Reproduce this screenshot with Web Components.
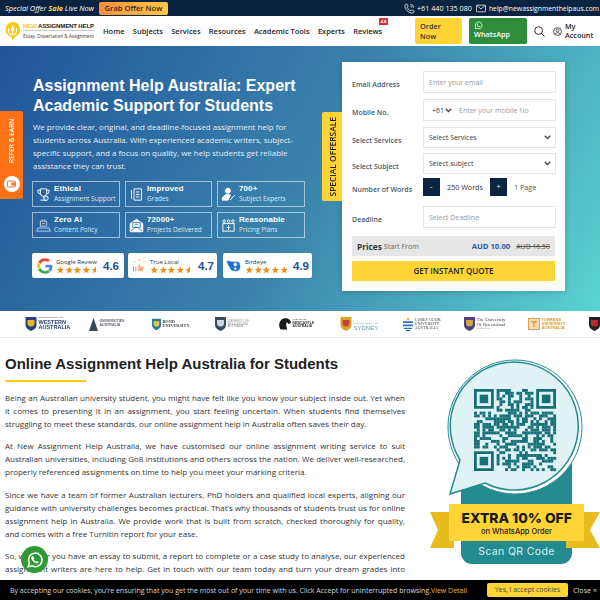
<!DOCTYPE html>
<html lang="en"><head><meta charset="utf-8"><title>Assignment Help Australia</title>
<style>
html,body{margin:0;padding:0;height:600px;overflow:hidden;background:#fff}
body{font-family:"Open Sans","Liberation Sans",sans-serif;color:#333}
</style></head><body>
<x-page></x-page>
<script>
function def(name, css, html){
  customElements.define(name, class extends HTMLElement{
    constructor(){super();this.attachShadow({mode:'open'}).innerHTML='<style>'+css+'</style>'+(typeof html==='function'?html(this):html);}
  });
}
const ic={
 phone:'<svg width="11" height="11" viewBox="0 0 24 24" fill="none" stroke="#fff" stroke-width="1.700"><path d="M6 2l3 5-2 2c1 3 4 7 8 8l2-2 5 3c0 3-2 4-4 4C9 22 2 13 2 6c0-2 2-4 4-4z"/><path d="M14 3a7 7 0 0 1 7 7M14 7a3 3 0 0 1 3 3"/></svg>',
 mail:'<svg width="10" height="9" viewBox="0 0 24 20" fill="none" stroke="#fff" stroke-width="1.800"><rect x="1" y="2" width="22" height="16" rx="2"/><path d="M2 3l10 8 10-8"/></svg>',
 wa:s=>`<svg width="${s}" height="${s}" viewBox="0 0 24 24"><path fill="none" stroke="currentColor" stroke-width="2" d="M3 21l1.400-5A9 9 0 1 1 8 19.700z"/><path fill="currentColor" d="M8.500 7c-.6 0-1.500 1-1.500 2.400 0 2.600 4.500 7.300 7.700 7.300 1.400 0 2.300-1 2.300-2l-2.600-1.500-1.100 1.100c-1.300-.5-2.700-1.800-3.300-3.200l1-1.100L9.700 7z"/></svg>`
};
const star=(c)=>`<svg viewBox="0 0 20 20" width="100%" height="100%"><path fill="${c}" d="M10 1l2.700 6 6.300.6-4.800 4.300 1.400 6.400L10 15l-5.600 3.300 1.400-6.400L1 7.600 7.300 7z"/></svg>`;

def('x-topbar',`:host{display:flex;align-items:center;height:16px;background:#0a2340;color:#fff;padding:0 5px;box-sizing:border-box}
 i{white-space:nowrap;font-size:7.400px;width:90px;flex:none} b{color:#ffd535;font-weight:700}
 .grab{margin-left:4px;width:69px;height:13px;line-height:13px;text-align:center;border-radius:2px;background:linear-gradient(90deg,#ff8f3c,#ffc843);color:#2a2a2a;font-size:7.600px;font-weight:600}
 .r{margin-left:auto;display:flex;align-items:center;white-space:nowrap;font-size:7.200px;margin-right:-5px;width:196px}
 .r span:first-of-type{margin:0 4px 0 2px}.r span:last-of-type{margin-left:3px;font-size:6.800px}
 svg{display:block;flex:none}`,
 `<i>Special Offer <b>Sale</b> Live Now</i><div class="grab">Grab Offer Now</div><div class="r">${ic.phone}<span>+61 440 135 080</span>${ic.mail}<span>help@newassignmenthelpaus.com</span></div>`);

def('x-logo',`:host{display:flex;align-items:center;width:90px;flex:none}
 svg{flex:none;display:block}
 .t{margin-left:3px;line-height:1} .a{font:700 6px "Liberation Sans",sans-serif;color:#222;white-space:nowrap;border-bottom:.5px solid #ccc;padding-bottom:1px;letter-spacing:-.02em} .a b{color:#f8c81e}
 .b{font:400 4.600px "Open Sans",sans-serif;color:#333;white-space:nowrap;margin-top:2px}`,
 `<svg width="15" height="18" viewBox="0 0 15 18"><path fill="#fcc917" d="M7.500 0a7.500 7.500 0 0 1 3 14.400L7.500 18l-1.500-3.300A7.500 7.500 0 0 1 7.500 0z"/><path fill="#fff" d="M7.500 3L9.500 8 8 9.500V12H7V9.500L5.500 8z"/><path fill="none" stroke="#fff" d="M3.500 6v3a4 4 0 0 0 8 0V6"/></svg><div class="t"><div class="a"><b>NEW</b> ASSIGNMENT HELP</div><div class="b">Essay, Dissertation &amp; Assignment</div></div>`);

def('x-nav',`:host{display:flex;align-items:center;height:30px;background:#fff;padding-left:5px;box-sizing:border-box;position:relative}
 nav{display:flex;margin-left:8px;gap:8.350px;width:279px;flex:none;font-size:7.450px;font-weight:600;color:#1d1d1d;white-space:nowrap}
 nav span{position:relative}
 em{position:absolute;left:26px;top:-8px;background:#d8323c;color:#fff;font:normal 700 4px "Open Sans",sans-serif;padding:1px 1.500px;line-height:5px}
 .btn{height:26px;box-sizing:border-box;border-radius:2px;font-size:7.300px;font-weight:600;line-height:9.500px}
 .o{margin-left:33px;width:47px;background:#ffd535;color:#333;padding:4px 5px 0}
 .w{margin-left:7px;width:58px;background:#2d8d3a;color:#fff;padding:3px 5px 0}
 .w svg{display:block;margin-bottom:0}
 .s{margin-left:7px;display:block;flex:none}
 .u{margin-left:8px;display:block;flex:none}
 .m{margin-left:3px;font-size:7.200px;font-weight:600;line-height:9.500px;color:#222}`,
 `<x-logo></x-logo><nav><span>Home</span><span>Subjects</span><span>Services</span><span>Resources</span><span>Academic Tools</span><span>Experts</span><span>Reviews<em>4.8</em></span></nav>
 <div class="btn o">Order<br>Now</div><div class="btn w">${ic.wa(9)}WhatsApp</div>
 <svg class="s" width="11" height="11" viewBox="0 0 24 24" fill="none" stroke="#222" stroke-width="2"><circle cx="10" cy="10" r="8.500"/><path d="M16 16l7 7"/></svg>
 <svg class="u" width="9" height="9" viewBox="0 0 24 24" fill="none" stroke="#222" stroke-width="2"><circle cx="12" cy="12" r="10.500"/><circle cx="12" cy="9" r="4"/><path d="M5 19c2-5 12-5 14 0"/></svg>
 <div class="m">My<br>Account</div>`);

def('x-feature',`:host{display:flex;align-items:center;box-sizing:border-box;height:26px;border:1px solid rgba(255,255,255,.55);color:#fff;padding-left:3px}
 ::slotted(svg){width:15px;height:15px;flex:none;display:block}
 .t{margin-left:3px;white-space:nowrap;line-height:10px}
 b{display:block;font:700 7.900px "Liberation Sans",sans-serif;letter-spacing:.02em;line-height:10px}
 span{display:block;font-size:6.500px;color:#dce9f2;line-height:10px}`,
 h=>`<slot></slot><div class="t"><b>${h.getAttribute('t')}</b><span>${h.getAttribute('s')}</span></div>`);

def('x-stars',`:host{display:flex;height:8px} div{width:8.700px;height:8px;flex:none} svg{display:block} .p{width:5px;overflow:hidden}.p svg{width:8.700px}`,
 h=>{const n=+h.getAttribute('n');let o='';for(let i=0;i<4;i++)o+=`<div>${star('#e8941a')}</div>`;o+=n>=5?`<div>${star('#e8941a')}</div>`:`<div class="p">${star('#e8941a')}</div>`;return o;});

def('x-rating',`:host{display:flex;align-items:center;background:#fff;border-radius:2px;height:25px;width:89px;box-sizing:border-box;padding-left:var(--p,4px);box-shadow:0 0 1px rgba(0,0,0,.2)}
 ::slotted(svg){display:block;flex:none}
 .t{margin-left:3px;line-height:1}
 span{display:block;font-size:6px;color:#333;line-height:8px;white-space:nowrap}
 b{margin-left:auto;margin-right:var(--mr,3px);font:700 11.500px "Liberation Sans",sans-serif;color:#24528f}`,
 h=>`<slot></slot><div class="t"><span>${h.getAttribute('t')}</span><x-stars n="${h.getAttribute('n')}"></x-stars></div><b>${h.getAttribute('v')}</b>`);

def('x-hero-left',`:host{display:block;width:280px;flex:none;color:#fff}
 h1{margin:0;font:700 16px/20px "Liberation Sans",sans-serif;color:#fff;width:272px}
 p{margin:5px 0 0;font-size:7.950px;line-height:13px;color:#e4eef5;width:272px}
 .f{display:grid;grid-template-columns:88px 87px 88px;gap:5px;margin-top:8px;width:273px;margin-left:-1px}
 .r{display:flex;gap:4px;margin-top:15px;margin-left:-1px}
 svg{fill:none;stroke:#fff;stroke-width:1.500}`,
 `<h1>Assignment Help Australia: Expert Academic Support for Students</h1>
 <p>We provide clear, original, and deadline-focused assignment help for students across Australia. With experienced academic writers, subject-specific support, and a focus on quality, we help students get reliable assistance they can trust.</p>
 <div class="f">
 <x-feature t="Ethical" s="Assignment Support"><svg viewBox="0 0 24 24"><path d="M7 3h10v7a5 5 0 0 1-10 0zM7 5H3v2a4 4 0 0 0 4 4M17 5h4v2a4 4 0 0 1-4 4M12 15v3M7 21h10"/><circle cx="16" cy="18" r="3.500" fill="#3a7fae"/></svg></x-feature>
 <x-feature t="Improved" s="Grades"><svg viewBox="0 0 24 24" stroke-width="1.200"><path d="M8 3h12v18H8zM4 5v14M11 8h6M11 12h6M11 16h6"/></svg></x-feature>
 <x-feature t="700+" s="Subject Experts"><svg viewBox="0 0 24 24"><circle cx="11" cy="6" r="4" fill="#fff"/><path fill="#fff" d="M2 21c0-5 3-9 9-9 2 0 3 .5 4 1l-4 8z"/><path d="M14 21l8-8"/></svg></x-feature>
 <x-feature t="Zero Ai" s="Content Policy"><svg viewBox="0 0 24 24" stroke-width="1.200" style="opacity:.7"><path d="M7 5h10v8H7zM10 2v3M14 2v3M3 16h18l2 5H1zM10 9h4"/></svg></x-feature>
 <x-feature t="72000+" s="Projects Delivered"><svg viewBox="0 0 24 24"><path fill="#fff" d="M2 9l10-7 10 7v13H2z"/><path stroke="#3a7fae" d="M6 7h12v8H6zM9 10h6M3 21l7-6h4l7 6"/></svg></x-feature>
 <x-feature t="Reasonable" s="Pricing Plans"><svg viewBox="0 0 24 24" stroke-width="1.200"><circle cx="5" cy="5" r="2"/><circle cx="12" cy="5" r="2"/><circle cx="19" cy="5" r="2"/><rect x="3" y="9" width="18" height="12"/><path d="M12 11v8M9 15h6"/></svg></x-feature>
 </div>
 <div class="r">
 <x-rating t="Google Review" v="4.6" n="4" style="width:92px;--p:5px;--mr:5px"><svg width="16" height="16" viewBox="0 0 48 48" stroke="none"><path fill="#ea4335" d="M24 9.500c3.500 0 6.700 1.300 9.100 3.500l6.800-6.800C35.800 2.400 30.300 0 24 0 14.600 0 6.500 5.400 2.600 13.200l7.900 6.200C12.400 13.700 17.700 9.500 24 9.500z"/><path fill="#4285f4" d="M47 24.500c0-1.600-.1-3.100-.4-4.500H24v9h12.900c-.6 3-2.200 5.500-4.800 7.200l7.700 6C44.300 38 47 31.900 47 24.500z"/><path fill="#fbbc05" d="M10.500 28.600A14.500 14.500 0 0 1 10.500 19.400L2.600 13.200a24 24 0 0 0 0 21.600z"/><path fill="#34a853" d="M24 48c6.500 0 11.900-2.100 15.800-5.800l-7.700-6c-2.100 1.400-4.900 2.300-8.100 2.300-6.300 0-11.600-4.200-13.500-9.900l-7.900 6.200C6.500 42.600 14.600 48 24 48z"/></svg></x-rating>
 <x-rating t="True Local" v="4.7" n="4"><svg width="15" height="17" viewBox="0 0 24 24" stroke="none"><path fill="#f4b28f" d="M4 13h4v9H4zM9 13l3-5c2 0 2 2 1 5h5c2 0 2 2 1 3l-1 6H9z"/><path fill="#5b9bd8" d="M1 13h3v9H1z"/><g fill="#f6c22c"><path d="M12 0l1 2.500 2.500.2-2 1.600.8 2.500L12 5.500 9.700 6.800l.8-2.500-2-1.600L11 2.500z"/><path d="M19 3l.7 1.600 1.800.2-1.300 1.100.4 1.700-1.600-.9-1.600.9.400-1.700-1.300-1.100 1.800-.2z"/></g><path fill="#ef8d3c" d="M4 3l.7 1.600 1.800.2-1.300 1.100.4 1.700L4 6.700l-1.600.9.400-1.700L1.500 4.800l1.800-.2z"/></svg></x-rating>
 <x-rating t="Birdeye" v="4.9" n="5" style="--p:3px;margin-left:2px"><svg width="16" height="15" viewBox="0 0 24 24" stroke="none"><path fill="#1a6fd4" fill-rule="evenodd" d="M0 3l8 2h6c6 0 9 3 8 7 2 4-1 10-8 10-5 0-9-3-10-8C2 12 0 8 0 3zM14 8a2.200 2.200 0 0 0 0 4.400 2.200 2.200 0 0 0 0-4.400zM14 15a2.200 2.200 0 0 0 0 4 2.200 2.200 0 0 0 0-4z"/></svg></x-rating>
 </div>`);

def('x-field',`:host{display:grid;grid-template-columns:71px 133px;align-items:center;margin-left:10px;font-size:7px;color:#3f4d5f}
 .l{font-weight:600;color:#4a5869;white-space:nowrap;padding-top:5px}
 .b{box-sizing:border-box;height:var(--h,22px);border:1px solid #e6e6e6;display:flex;align-items:center;padding:0 4px 0 5px;color:#9a9a9a;white-space:nowrap}
 :host([sel]) .b{color:#3c3c3c;justify-content:space-between}
 :host([bare]) .b{border:0;padding:0}`,
 h=>`<div class="l">${h.getAttribute('l')}</div><div class="b"><slot></slot></div>`);

const chev='<svg width="7" height="5" viewBox="0 0 10 7" fill="none" stroke="#444" stroke-width="1.800"><path d="M1 1l4 4 4-4"/></svg>';
def('x-quote',`:host{display:flex;flex-direction:column;width:223px;height:229px;flex:none;box-sizing:border-box;background:#fff;padding-top:9px;position:relative;box-shadow:0 1px 6px rgba(0,0,0,.2)}
 .tab{position:absolute;left:-20px;top:50px;width:20px;height:89px;background:#ffd535;border-radius:2px 0 0 2px;display:flex;align-items:center;justify-content:center}
 .tab span{writing-mode:vertical-rl;transform:rotate(180deg);font-size:8.400px;font-weight:600;color:#222;white-space:nowrap}
 .cc{color:#444;display:flex;align-items:center;gap:1px;margin:0 7px 0 3px}
 .st{display:flex;align-items:center;height:18px;color:#333;font-size:7.200px}
 .pm{width:17px;height:18px;background:#0a2340;color:#fff;text-align:center;line-height:17px}
 .n{width:50px;text-align:center}.pg{margin-left:7px;color:#555}
 .pr{margin:8px 0 0 10px;width:203px;height:20px;box-sizing:border-box;background:#e6e6e6;display:flex;align-items:center;padding:0 5px;font-size:7.100px;color:#666;white-space:nowrap}
 .pr b{font-size:8.300px;color:#333;margin-right:2px}
 .pr strong{margin-left:auto;font-size:7.700px;color:#2b5ca8;font-weight:700}
 .pr s{margin-left:6px;color:#555;font-size:6.900px}
 .go{margin:5px 0 0 10px;width:203px;height:20px;background:#ffd535;text-align:center;line-height:20px;font-size:8px;font-weight:600;color:#222;border-radius:1px}`,
 `<div class="tab"><span>SPECIAL OFFERSALE</span></div>
 <x-field l="Email Address" style="margin-bottom:6px">Enter your email</x-field>
 <x-field l="Mobile No." style="margin-bottom:6px"><span class="cc">+61${chev}</span>Enter your mobile No</x-field>
 <x-field l="Select Services" sel style="--h:21px;margin-bottom:5px">Select Services${chev}</x-field>
 <x-field l="Select Subject" sel style="--h:21px;margin-bottom:4px">Select subject${chev}</x-field>
 <x-field l="Number of Words" bare style="--h:18px;margin-bottom:10px"><div class="st"><div class="pm">-</div><div class="n">250 Words</div><div class="pm">+</div><div class="pg">1 Page</div></div></x-field>
 <x-field l="Deadline">Select Deadline</x-field>
 <div class="pr"><b>Prices</b> Start From<strong>AUD 10.00</strong><s>AUD 16.50</s></div>
 <div class="go">GET INSTANT QUOTE</div>`);

def('x-refer',`:host{position:absolute;left:0;top:65px;width:23px;height:88px;background:#ff7115;border-radius:0 2px 2px 0;display:flex;flex-direction:column;align-items:center;color:#fff}
 span{writing-mode:vertical-rl;transform:rotate(180deg);font-size:6.500px;font-weight:600;white-space:nowrap;margin-top:7px;height:45px;text-align:center}
 .c{width:16px;height:16px;border-radius:50%;background:#fff;margin-top:auto;margin-bottom:7px;display:flex;align-items:center;justify-content:center}`,
 `<span>REFER &amp; EARN</span><div class="c"><svg width="9" height="8" viewBox="0 0 18 16" fill="none" stroke="#f0782a" stroke-width="2"><rect x="1" y="2" width="16" height="12" rx="2"/><rect x="10" y="6" width="7" height="4" fill="#f0782a"/></svg></div>`);

def('x-hero',`:host{display:flex;height:265px;box-sizing:border-box;padding:16px 0 0 33px;position:relative;background:linear-gradient(118deg,#21559b 0%,#3b84ad 52%,#5ad3d2 100%)}
 x-hero-left{margin-top:14px}
 x-quote{margin-left:29px}`,
 `<x-refer></x-refer><x-hero-left></x-hero-left><x-quote></x-quote>`);

def('x-uni',`:host{display:flex;align-items:center;flex:none;width:var(--w,40px);height:18px;font-family:"Liberation Sans",sans-serif;color:var(--c,#2a3f6a);line-height:1;gap:1.500px}
 ::slotted(svg){display:block;flex:none}
 div{white-space:nowrap;font-size:var(--f,5px);font-weight:var(--wg,700);font-family:var(--ff,inherit)}`,
 `<slot name="i"></slot><div><slot></slot></div>`);

const crest=(a,b,w=11,h=14)=>`<svg slot="i" width="${w}" height="${h}" viewBox="0 0 11 14"><path fill="${a}" d="M0 0h11v8c0 3-3 5-5.500 6C3 13 0 11 0 8z"/><path fill="${b}" d="M2 3h7v3a3.500 3.500 0 0 1-7 0z"/></svg>`;
const sm=(t,f=2.500)=>`<span style="font-size:${f}px;font-weight:400;display:block">${t}</span>`;
def('x-logos',`:host{display:flex;align-items:center;height:27px;border-bottom:1px solid #e8e8e8;box-sizing:border-box;padding-left:25px;gap:23px;overflow:hidden;filter:blur(.35px);background:#fff}`,
 `<x-uni style="--w:41px;--c:#27407c;--f:5.500px">${crest('#27407c','#e4b62c',12,14)}<span>${sm('THE UNIVERSITY OF')}WESTERN<br>AUSTRALIA</span></x-uni>
 <x-uni style="--w:40px;--c:#667;--f:3.600px"><svg slot="i" width="9" height="13" viewBox="0 0 9 13"><path fill="#39465c" d="M0 13L4.500 0 9 13z"/></svg>UNIVERSITIES<br>AUSTRALIA</x-uni>
 <x-uni style="--w:40px;--c:#444;--f:4.300px;--ff:'Liberation Serif'">${crest('#2a7d9c','#e5c84a',9,15)}BOND<br>UNIVERSITY</x-uni>
 <x-uni style="--w:40px;--c:#889;--f:2.800px;--wg:400">${crest('#3a4a5c','#cfd6de')}UNIVERSITY OF<br>WOLLONGONG<br>AUSTRALIA</x-uni>
 <x-uni style="--w:39px;--c:#333;--f:3.400px"><svg slot="i" width="13" height="14" viewBox="0 0 14 14"><path fill="#1a1a1a" d="M3 13C0 9 1 3 6 1c4-1 8 1 8 5l-3 1-1-2c-2 1-1 4 0 8z"/></svg>${sm('THE UNI OF')}NEWCASTLE<br>AUSTRALIA</x-uni>
 <x-uni style="--w:40px;--c:#5f9fb6;--f:6px;--wg:400">${crest('#d9a62c','#c9423a',12,14)}<span style="margin-left:2px">${sm('THE UNIVERSITY OF')}SYDNEY</span></x-uni>
 <x-uni style="--w:38px;--c:#444;--f:4.200px;--ff:'Liberation Serif';--wg:400"><svg slot="i" width="10" height="16" viewBox="0 0 11 16"><path fill="#f0c22f" d="M5.500 0l2 4h-4z"/><path fill="#2a72b8" d="M0 5h11v2H0zM0 8.500h11v2H0zM1 12h9v1.500H1zM3 14.500h5V16H3z"/></svg>JAMES COOK<br>UNIVERSITY<br>AUSTRALIA</x-uni>
 <x-uni style="--w:41px;--c:#3d3d3d;--f:4.800px;--ff:'Liberation Serif';--wg:400">${crest('#4f3b7d','#c9a74a',11,14)}The University<br>Of Queensland${sm('AUSTRALIA')}</x-uni>
 <x-uni style="--w:38px;--c:#d9952e;--f:4px"><svg slot="i" width="12" height="12" viewBox="0 0 12 12"><rect x=".5" y=".5" width="11" height="11" fill="#f8ddb0" stroke="#dca154"/><path fill="#dca154" d="M3 3h6v1.500H6.800V9H5.200V4.500H3z"/></svg>TORRENS<br>UNIVERSITY<br>AUSTRALIA</x-uni>
 <x-uni style="--w:12px">${crest('#222','#bb2a2a',11,14)}</x-uni>`);

def('x-article',`:host{display:block;width:400px;flex:none}
 h2{margin:0;font:700 15px/20px "Liberation Sans",sans-serif;color:#222}
 .u{width:81px;height:2px;background:#fcc917;margin:6px 0 8.500px}
 p{margin:0 0 9.500px;font-size:8px;line-height:13px;color:#333;text-align:justify}
 p:last-child{text-align-last:justify}`,
 `<h2>Online Assignment Help Australia for Students</h2><div class="u"></div>
 <p>Being an Australian university student, you might have felt like you know your subject inside out. Yet when it comes to presenting it in an assignment, you start feeling uncertain. When students find themselves struggling to meet these standards, our online assignment help in Australia often saves their day.</p>
 <p>At New Assignment Help Australia, we have customised our online assignment writing service to suit Australian universities, including Go8 institutions and others across the nation. We deliver well-researched, properly referenced assignments on time to help you meet your marking criteria.</p>
 <p>Since we have a team of former Australian lecturers, PhD holders and qualified local experts, aligning our guidance with university challenges becomes practical. That’s why thousands of students trust us for online assignment help in Australia. We provide work that is built from scratch, checked thoroughly for quality, and comes with a free Turnitin report for your ease.</p>
 <p>So, whether you have an essay to submit, a report to complete or a case study to analyse, our experienced assignment writers are here to help. Get in touch with our team today and turn your dream grades into</p>`);

function qrRects(){
  const N=29,s=82/N;let o='';let seed=7;
  const rnd=()=>{seed=(seed*1103515245+12345)&0x7fffffff;return (seed>>12)%100;};
  const inF=(x,y,a,b)=>x>=a-1&&x<=a+7&&y>=b-1&&y<=b+7;
  for(let y=0;y<N;y++)for(let x=0;x<N;x++){
    if(inF(x,y,0,0)||inF(x,y,22,0)||inF(x,y,0,22))continue;
    if(rnd()<52)o+=`<rect x="${(x*s).toFixed(2)}" y="${(y*s).toFixed(2)}" width="${(s+.1).toFixed(2)}" height="${(s+.1).toFixed(2)}"/>`;
  }
  const f=(a,b)=>`<path fill-rule="evenodd" d="M${a*s} ${b*s}h${7*s}v${7*s}h${-7*s}zM${(a+1)*s} ${(b+1)*s}v${5*s}h${5*s}v${-5*s}z"/><rect x="${(a+2)*s}" y="${(b+2)*s}" width="${3*s}" height="${3*s}"/>`;
  return o+f(0,0)+f(22,0)+f(0,22);
}
def('x-qr',`:host{display:block;width:180px;height:230px;flex:none} svg{display:block}
 text{font-family:Inter,"Liberation Sans",sans-serif}`,
 `<svg width="180" height="230" viewBox="0 0 180 230">
 <path fill="#238a90" d="M41 100h111v103a11 11 0 0 1-11 11H52a11 11 0 0 1-11-11z"/>
 <circle cx="95" cy="77" r="67" fill="#fff" stroke="#238a90" stroke-width="1"/>
 <path fill="#dff2f5" stroke="#238a90" stroke-width="1.500" d="M40 110A64 64 0 1 1 65 133L30 144z"/>
 <g fill="#176f78" transform="translate(54 39)">${qrRects()}</g>
 <path fill="#e8bc1f" d="M10 162h24v36H10l8-18zM180 162h-34v36h34l-10-18z"/>
 <rect x="29" y="154" width="135" height="37" fill="#ffd535"/>
 <text x="96.700" y="172.500" text-anchor="middle" font-size="13.800" font-weight="800" fill="#1a1a1a">EXTRA 10% OFF</text>
 <text x="96.500" y="184" text-anchor="middle" font-size="7.500" font-weight="500" fill="#1a1a1a">on WhatsApp Order</text>
 <text x="96.500" y="205" text-anchor="middle" font-size="10.600" fill="#d6eeee" letter-spacing=".3">Scan QR Code</text>
 </svg>`);

def('x-wa',`:host{position:absolute;left:21px;top:546px;width:27px;height:27px;border-radius:50%;background:#2f9a35;color:#fff;display:flex;align-items:center;justify-content:center}`,
 ic.wa(18));

def('x-cookie',`:host{position:fixed;left:0;right:0;bottom:0;height:20px;background:#000;color:#d8d8d8;display:flex;align-items:center;font-size:7px;padding-left:10px;white-space:nowrap;box-sizing:border-box}
 a{color:#e8b83a;text-decoration:none}
 .y{position:absolute;left:487px;top:3px;width:81px;height:14px;line-height:14px;text-align:center;background:#ffd535;color:#444;border-radius:2px;font-size:6.900px}
 .c{position:absolute;left:573px;font-size:7.200px}`,
 `<span>By accepting our cookies, you’re ensuring that you get the most out of your time with us. Click Accept for uninterrupted browsing.<a>View Detail</a></span><div class="y">Yes, I accept cookies</div><div class="c">Close ×</div>`);

def('x-page',`:host{display:block;width:600px;height:600px;position:relative;overflow:hidden}
 .m{display:flex;padding:16px 0 0 5px;gap:15px}`,
 `<x-topbar></x-topbar><x-nav></x-nav><x-hero></x-hero><x-logos></x-logos>
 <div class="m"><x-article></x-article><x-qr style="margin-top:-4px"></x-qr></div>
 <x-wa></x-wa><x-cookie></x-cookie>`);
</script>
</body></html>
